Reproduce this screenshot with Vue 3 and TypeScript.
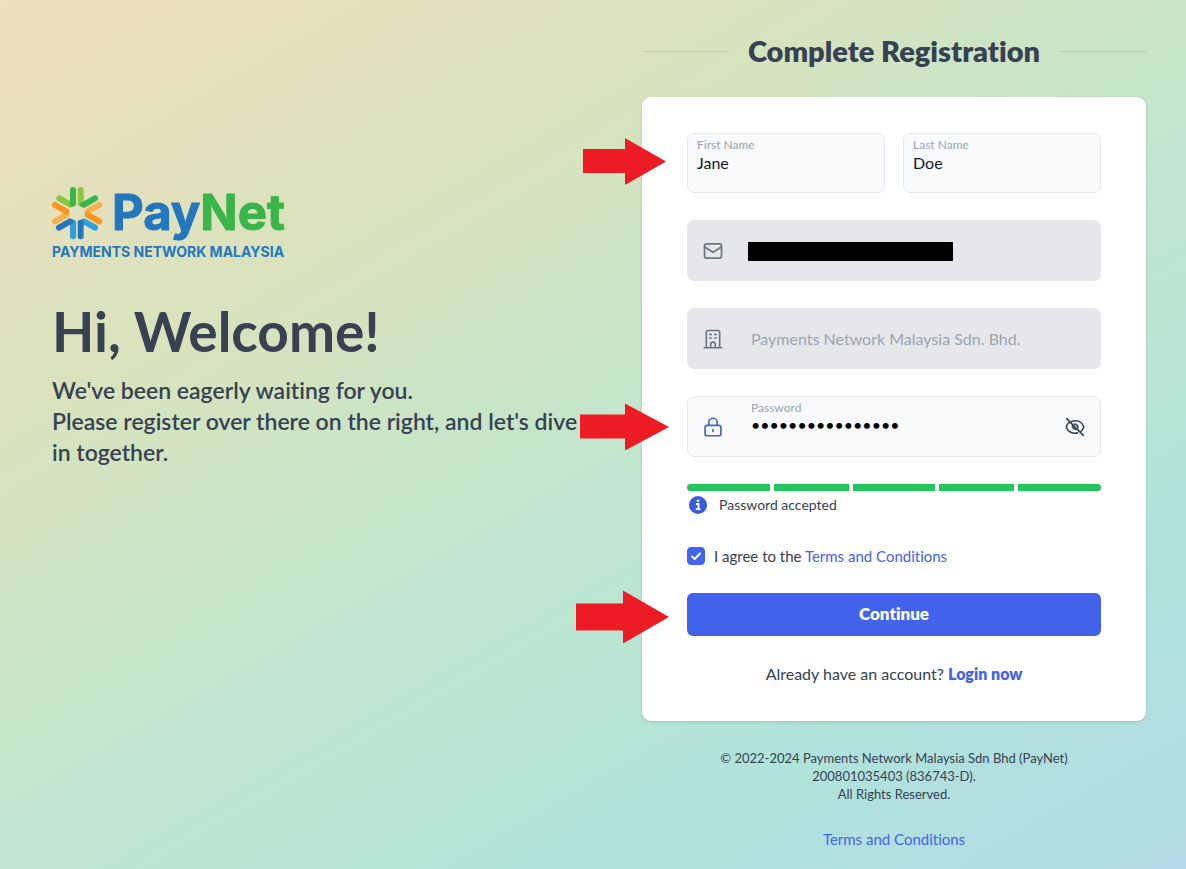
<script setup lang="ts">
import { ref } from 'vue'

const firstName = ref('Jane')
const lastName = ref('Doe')
const password = ref('Abcdefgh1234567!')
const showPassword = ref(false)
const agreed = ref(true)
const strengthSegments = 5
</script>

<template>
  <main class="page">
    <section class="intro">
      <svg class="logo" viewBox="0 0 236 76" role="img" aria-label="PayNet, Payments Network Malaysia">
        <g transform="translate(-12 -11) scale(0.3333)" fill="none" stroke-width="18" stroke-linecap="round">
          <path d="M58 70L93 90" stroke="#8cc63f" />
          <path d="M122 45V87" stroke="#8cc63f" />
          <path d="M165 70L128 91" stroke="#39b54a" />
          <path d="M99 45V87" stroke="#39b54a" />
          <path d="M45 139L80 119" stroke="#fbb050" />
          <path d="M45 90L80 110" stroke="#f7931e" />
          <path d="M178 90L142 110" stroke="#fbb050" />
          <path d="M178 139L142 119" stroke="#f7931e" />
          <path d="M99 184V142" stroke="#2e9fd8" />
          <path d="M57 158L92 138" stroke="#2476bd" />
          <path d="M165 158L130 138" stroke="#2e9fd8" />
          <path d="M122 184V142" stroke="#2476bd" />
          <path d="M111 90L134 100V129L111 139L88 129V100Z" fill="#e0e1bd" stroke="none" />
        </g>
        <text class="brand" x="60" y="44"><tspan fill="#2476bd" stroke="#2476bd">Pay</tspan><tspan fill="#39b54a" stroke="#39b54a">Net</tspan></text>
        <text class="tagline" x="0" y="71">PAYMENTS NETWORK MALAYSIA</text>
      </svg>
      <h1>Hi, Welcome!</h1>
      <p>We've been eagerly waiting for you.<br />Please register over there on the right, and let's dive in together.</p>
    </section>

    <section class="panel">
      <h2><span>Complete Registration</span></h2>

      <form class="card" @submit.prevent>
        <div class="row names">
          <svg class="arrow" width="86" height="50" viewBox="0 0 86 50" aria-hidden="true"><path d="M0 11H42V0L83 23.5L42 47V35H0Z" /></svg>
          <div class="field stacked">
            <label for="first">First Name</label>
            <input id="first" v-model="firstName" type="text" />
          </div>
          <div class="field stacked">
            <label for="last">Last Name</label>
            <input id="last" v-model="lastName" type="text" />
          </div>
        </div>

        <div class="field wide locked">
          <svg class="icon" viewBox="0 0 24 24" aria-hidden="true"><rect x="1.8" y="3.500" width="20.400" height="17" rx="2.500" /><path d="M2.500 7.500L12 13.500L21.500 7.500" /></svg>
          <div class="entry">
            <input type="email" aria-label="Email" disabled />
            <span class="redaction"></span>
          </div>
        </div>

        <div class="field wide locked">
          <svg class="icon" viewBox="0 0 24 24" aria-hidden="true"><path d="M1.500 22.500H22.500M4 22.500V4Q4 1.800 6.200 1.800H17.800Q20 1.800 20 4V22.500M9.300 22.500V18.500Q9.300 15.800 12 15.800Q14.700 15.800 14.700 18.500V22.500M8.300 6.500H9.800M14.200 6.500H15.700M8.300 10.800H9.800M14.200 10.800H15.700" /></svg>
          <div class="entry">
            <input type="text" aria-label="Organisation" value="Payments Network Malaysia Sdn. Bhd." disabled />
          </div>
        </div>

        <div class="row">
          <svg class="arrow" width="89" height="47" viewBox="0 0 89 47" aria-hidden="true"><path d="M0 11H45V0L89 23.500L45 47V35H0Z" /></svg>
          <div class="field wide">
            <svg class="icon blue" viewBox="0 0 24 24" aria-hidden="true"><rect x="2.500" y="10" width="19" height="12.500" rx="2.500" /><path d="M7 10V6.500A5 5 0 0 1 17 6.500V10M12 15V17.500" /></svg>
            <div class="entry stacked filled">
              <label for="password">Password</label>
              <input id="password" v-model="password" :type="showPassword ? 'text' : 'password'" />
            </div>
            <button class="eye" type="button" aria-label="Toggle password visibility" @click="showPassword = !showPassword">
              <svg viewBox="0 0 24 24" aria-hidden="true"><path d="M2 2L22 22M8 5.300C15 3 20 6 22 10.500Q22.700 12 22 13.500Q21 15.700 19 17.200M5 6.800Q2.800 8.500 2 10.500Q1.400 12 2 13.500C4 18.300 9.500 20.500 15 19M9 9.500A4 4 0 0 0 14 14.500M11.500 8.500A4 4 0 0 1 15.500 12.500" /></svg>
            </button>
          </div>
        </div>

        <div class="strength">
          <div class="meter"><span v-for="n in strengthSegments" :key="n"></span></div>
          <p class="status">
            <svg viewBox="0 0 18 18" aria-hidden="true"><circle cx="9" cy="9" r="9" fill="#3b5bdb" /><path d="M7 8H9.500V13M6.800 13.200H11.300" fill="none" stroke="#fff" stroke-width="1.800" /><circle cx="9" cy="4.700" r="1.300" fill="#fff" /></svg>
            Password accepted
          </p>
        </div>

        <div class="agree">
          <span class="check">
            <input id="agree" v-model="agreed" type="checkbox" />
            <svg v-if="agreed" viewBox="0 0 18 18" aria-hidden="true"><path d="M5 9.500L7.700 12L13 6.500" /></svg>
          </span>
          <span><label for="agree">I agree to the</label> <a href="#terms">Terms and Conditions</a></span>
        </div>

        <div class="row">
          <svg class="arrow" width="93" height="57" viewBox="0 -4 93 57" aria-hidden="true"><path d="M0 13H47V0L93 26.500L47 53V40H0Z" /></svg>
          <button class="submit" type="submit">Continue</button>
        </div>

        <p class="login">Already have an account? <a href="#login">Login now</a></p>
      </form>

      <footer>
        <p>© 2022-2024 Payments Network Malaysia Sdn Bhd (PayNet)<br />200801035403 (836743-D).<br />All Rights Reserved.</p>
        <a href="#terms">Terms and Conditions</a>
      </footer>
    </section>
  </main>
</template>

<style>
body {
  margin: 0;
}
</style>

<style scoped>
* {
  box-sizing: border-box;
}
.page {
  display: grid;
  grid-template-columns: 530fr 504fr;
  gap: 60px;
  min-height: 100vh;
  padding: 33px 40px 20px 52px;
  font-family: Lato, "Open Sans", sans-serif;
  font-variant-ligatures: none;
  color: #374151;
  background: linear-gradient(150deg, #f0debc 0%, #e5e0bc 14%, #d7e3be 30%, #c8e5c7 44%, #bfe6cf 56%, #b0e3dc 79%, #b3dbe6 100%);
}
h1,
h2,
p {
  margin: 0;
}
a {
  color: #4263eb;
  text-decoration: none;
}
.intro {
  padding-top: 153px;
}
.logo {
  display: block;
  width: 236px;
  height: 76px;
  overflow: visible;
}
.brand {
  font: 700 49px Inter, sans-serif;
  stroke-width: 1;
  stroke-linejoin: round;
}
.tagline {
  font: 700 14px Inter, sans-serif;
  fill: #2476bd;
}
h1 {
  margin-top: 36px;
  font-size: 55px;
  line-height: 66px;
  font-weight: 700;
}
.intro p {
  margin-top: 11px;
  font-size: 23px;
  line-height: 31px;
  font-weight: 600;
}
h2 {
  display: flex;
  align-items: center;
  gap: 19px;
  font-size: 29px;
  line-height: 36px;
  font-weight: 800;
}
h2::before,
h2::after {
  content: "";
  flex: 1;
  height: 1px;
  background: #bcc8c8;
}
.card {
  display: flex;
  flex-direction: column;
  gap: 27px;
  margin-top: 28px;
  padding: 36px 45px;
  border-radius: 9px;
  background: #fff;
  box-shadow: 0 1px 3px rgba(0, 0, 0, 0.15);
}
.row {
  position: relative;
}
.names {
  display: grid;
  grid-template-columns: 1fr 1fr;
  gap: 18px;
}
.arrow {
  position: absolute;
  top: 50%;
  right: calc(100% + 18px);
  transform: translateY(-50%);
  fill: #ed1c24;
}
.field {
  display: flex;
  align-items: center;
  height: 60px;
  border: 1px solid #e5e7eb;
  border-radius: 7px;
  background: #f9fafc;
}
.field.wide {
  height: 61px;
}
.field.locked {
  background: #e5e7eb;
}
.stacked {
  display: flex;
  flex-direction: column;
  align-items: stretch;
}
.field.stacked {
  padding: 4px 9px;
}
.stacked label {
  font-size: 12px;
  line-height: 14px;
  color: #9ca3af;
}
input {
  width: 100%;
  padding: 0;
  border: 0;
  background: transparent;
  font: 16px/22px Lato, sans-serif;
  font-variant-ligatures: none;
  color: #111827;
}
input:disabled {
  color: #9ca3af;
}
.icon {
  flex: none;
  width: 20px;
  height: 20px;
  margin: 0 28px 0 15px;
  fill: none;
  stroke: #6b7280;
  stroke-width: 2;
  stroke-linecap: round;
  stroke-linejoin: round;
}
.icon.blue {
  stroke: #4263c8;
}
.entry {
  position: relative;
  flex: 1;
  min-width: 0;
}
.entry input {
  height: 24px;
}
.redaction {
  position: absolute;
  top: 3px;
  left: -3px;
  width: 205px;
  height: 19px;
  background: #000;
}
.filled {
  align-self: flex-start;
  margin-top: 4px;
}
.filled input {
  height: 20px;
  color: #000;
}
.eye {
  flex: none;
  display: grid;
  place-items: center;
  width: 46px;
  height: 46px;
  padding: 0 4px 0 0;
  border: 0;
  background: transparent;
}
.eye svg {
  width: 20px;
  height: 20px;
  fill: none;
  stroke: #374151;
  stroke-width: 2;
  stroke-linecap: round;
}
.meter {
  display: flex;
  gap: 4px;
  height: 7px;
  border-radius: 4px;
  overflow: hidden;
}
.meter span {
  flex: 11;
  background: #22c55e;
}
.meter span:nth-child(even) {
  flex: 10;
}
.status {
  display: flex;
  align-items: center;
  gap: 12px;
  margin-top: 4px;
  padding-left: 2px;
  font-size: 14px;
  line-height: 20px;
}
.status svg {
  width: 18px;
  height: 18px;
}
.agree {
  display: flex;
  align-items: center;
  gap: 9px;
  margin-top: 4px;
  font-size: 15px;
  line-height: 20px;
}
.check {
  display: grid;
  width: 18px;
  height: 18px;
}
.check > * {
  grid-area: 1 / 1;
}
.check input {
  appearance: none;
  width: 18px;
  height: 18px;
  margin: 0;
  border: 1px solid #4263eb;
  border-radius: 4px;
}
.check input:checked {
  background: #4263eb;
}
.check svg {
  pointer-events: none;
  fill: none;
  stroke: #fff;
  stroke-width: 2;
  stroke-linecap: round;
  stroke-linejoin: round;
}
.submit {
  display: block;
  width: 100%;
  height: 43px;
  padding: 0 0 2px;
  border: 0;
  border-radius: 6px;
  background: #4263eb;
  color: #fff;
  font: 800 17px Lato, sans-serif;
  font-variant-ligatures: none;
}
.login {
  font-size: 16px;
  line-height: 22px;
  text-align: center;
}
.login a {
  font-weight: 800;
}
footer {
  margin-top: 28px;
  font-size: 13px;
  line-height: 18px;
  text-align: center;
}
footer a {
  display: inline-block;
  margin-top: 27px;
  font-size: 15px;
  line-height: 18px;
}
</style>
